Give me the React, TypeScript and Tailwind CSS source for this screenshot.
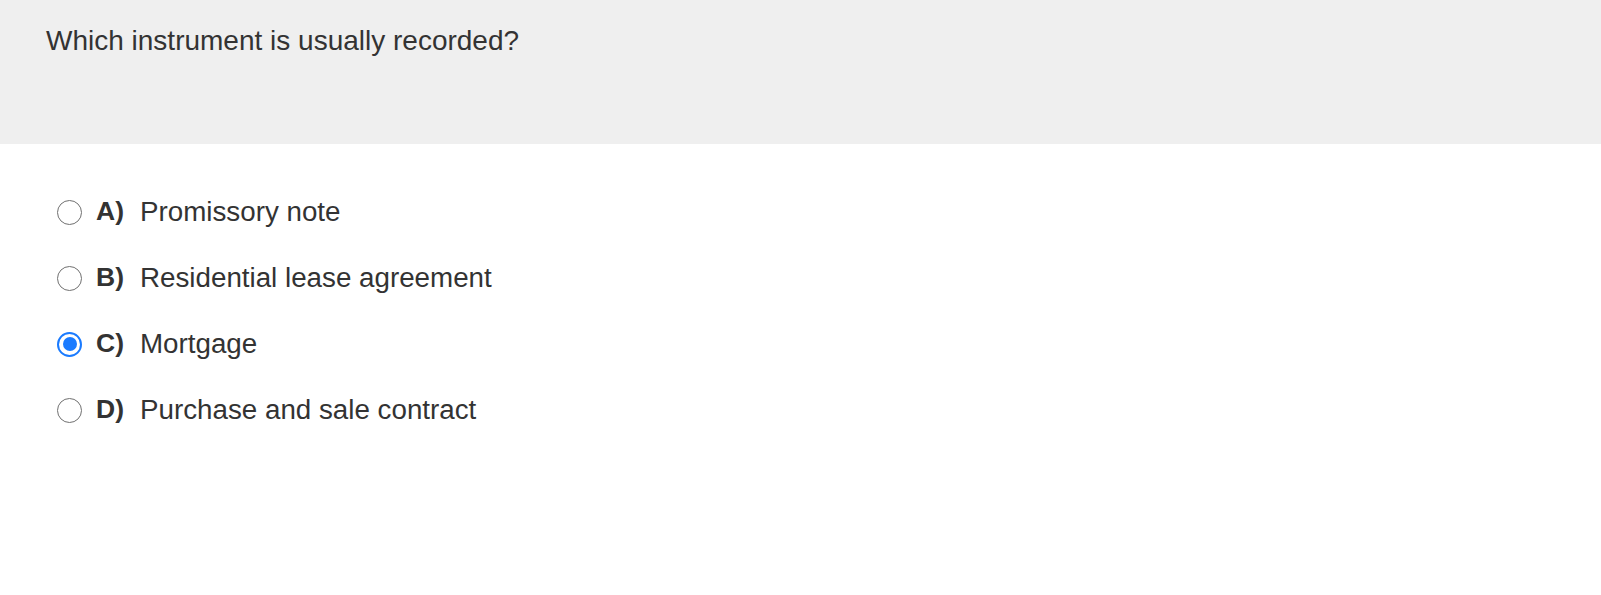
const options = [
  { key: 'A)', text: 'Promissory note' },
  { key: 'B)', text: 'Residential lease agreement' },
  { key: 'C)', text: 'Mortgage' },
  { key: 'D)', text: 'Purchase and sale contract' },
];

function Radio({ checked }: { checked: boolean }) {
  if (checked) {
    return (
      <span className="flex h-[25px] w-[25px] shrink-0 items-center justify-center rounded-full border-2 border-[#1a7bff] bg-white">
        <span className="h-[14px] w-[14px] rounded-full bg-[#1a7bff]" />
      </span>
    );
  }
  return <span className="h-[25px] w-[25px] shrink-0 rounded-full border-[1.5px] border-[#707070] bg-white" />;
}

export default function App() {
  const selected = 'C)';
  return (
    <div className="min-h-[595px] w-full bg-white font-['Liberation_Sans',Arial,sans-serif] text-[#333333]">
      <div className="h-[144px] bg-[#efefef] pl-[46px] pt-[25px]">
        <h1 className="text-[28px] leading-[32px]">Which instrument is usually recorded?</h1>
      </div>

      <div className="mt-[35px] flex flex-col pl-[57px]">
        {options.map((o) => (
          <label key={o.key} className="flex h-[66px] items-center">
            <Radio checked={o.key === selected} />
            <span className="ml-[14px] w-[44px] text-[26.5px] font-bold">{o.key}</span>
            <span className="text-[27.75px]">{o.text}</span>
          </label>
        ))}
      </div>
    </div>
  );
}
